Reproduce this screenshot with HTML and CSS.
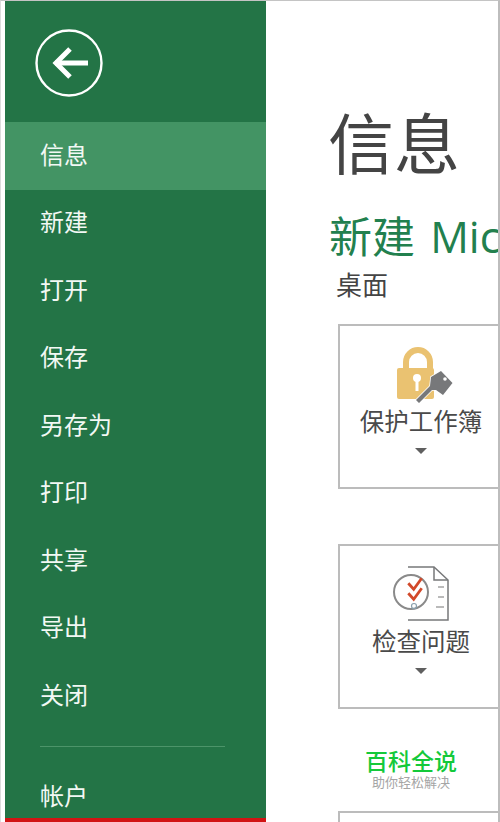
FILE: index.html
```html
<!DOCTYPE html>
<html lang="zh-CN">
<head>
<meta charset="utf-8">
<title>信息</title>
<link rel="stylesheet" href="styles.css">
</head>
<body>
<div class="window">
  <aside class="sidebar">
    <div class="back">
      <svg class="back-icon" width="68" height="68" viewBox="0 0 68 68" fill="none" stroke="#fff">
        <circle cx="34" cy="34" r="32.5" stroke-width="2.4"/>
        <path d="M20 34H53" stroke-width="5"/>
        <path d="M35 20L21 34L35 48" stroke-width="5"/>
      </svg>
    </div>
    <nav class="menu">
      <a class="item active">信息</a>
      <a class="item">新建</a>
      <a class="item">打开</a>
      <a class="item">保存</a>
      <a class="item">另存为</a>
      <a class="item">打印</a>
      <a class="item">共享</a>
      <a class="item">导出</a>
      <a class="item">关闭</a>
    </nav>
    <div class="divider"></div>
    <a class="item account">帐户</a>
  </aside>
  <main class="content">
    <h1 class="title">信息</h1>
    <h2 class="subtitle">新建 Microsoft Excel 工作表</h2>
    <div class="path">桌面</div>
    <section class="card card-first">
      <svg class="card-icon" width="64" height="64" viewBox="0 0 64 64">
        <path d="M17 30V22a12 12 0 0 1 24 0V30" fill="none" stroke="#eac271" stroke-width="6"/>
        <rect x="8" y="28" width="37" height="31" rx="2" fill="#eac271"/>
        <circle cx="28" cy="38" r="4" fill="#fff"/>
        <rect x="26.500" y="39" width="3" height="12" fill="#fff"/>
        <path d="M42 37L52 31L63.500 43L54 55L47 50L43 50L30 63L27 60L41 46Z" fill="#77787a" stroke="#fff" stroke-width="1.500" paint-order="stroke"/>
        <circle cx="56" cy="39" r="1.800" fill="#fff"/>
      </svg>
      <div class="card-label">保护工作簿</div>
      <svg class="caret" width="12" height="6" viewBox="0 0 12 6"><path d="M0 0H12L6 6Z" fill="#5f5f5f"/></svg>
    </section>
    <section class="card card-second">
      <svg class="card-icon" width="64" height="64" viewBox="0 0 64 64" fill="none">
        <path d="M19 7H45L59 20V60H19" fill="#fff" stroke="#77787a" stroke-width="1.500"/>
        <path d="M45 7V20H59" stroke="#77787a" stroke-width="1.500"/>
        <path d="M49 27H55M49 37H55M47 47H55" stroke="#a4a4a4" stroke-width="1.500"/>
        <circle cx="22" cy="32" r="17" fill="#fff" stroke="#8a8a8a" stroke-width="2"/>
        <path d="M19.300 23.300L24.700 29.300L32.700 18.300M19.300 33.300L24.700 39.300L32.700 28.300" stroke="#d2492a" stroke-width="2.800"/>
        <circle cx="25" cy="46" r="2.500" stroke="#8aa0ad" stroke-width="1.200"/>
      </svg>
      <div class="card-label">检查问题</div>
      <svg class="caret" width="12" height="6" viewBox="0 0 12 6"><path d="M0 0H12L6 6Z" fill="#5f5f5f"/></svg>
    </section>
    <section class="card"></section>
    <div class="watermark">
      <div class="wm-title">百科全说</div>
      <div class="wm-sub">助你轻松解决</div>
    </div>
  </main>
</div>
</body>
</html>
```

FILE: styles.css
```css
* { box-sizing: border-box; }
html, body { margin: 0; height: 100%; overflow: hidden; background: #fff; }
body { font-family: "Noto Sans CJK SC", "Liberation Sans", sans-serif; }
.window {
  position: relative;
  display: flex;
  width: 500px;
  height: 822px;
  padding-left: 4px;
  border-top: 1px solid #c4c4c4;
  border-left: 1px solid #dcdcdc;
  border-right: 2px solid #bdbdbd;
  overflow: hidden;
}
.sidebar {
  flex: 0 0 261px;
  background: #237446;
  border-bottom: 4px solid #d11414;
  color: #fff;
  display: flex;
  flex-direction: column;
}
.back { flex: none; height: 121px; padding: 28px 0 0 30px; }
.back-icon { display: block; }
.menu { flex: none; display: flex; flex-direction: column; }
.item {
  flex: none;
  display: flex;
  align-items: center;
  height: 67.5px;
  padding: 0 0 4px 35px;
  font-size: 24px;
  line-height: 1;
  color: #f2f8f4;
}
.active { background: #439464; }
.divider {
  flex: none;
  height: 1px;
  margin: 16px 41px 0 35px;
  background: #4c9469;
}
.account { margin-top: 17px; }
.content {
  flex: 1;
  min-width: 0;
  padding-left: 64px;
  overflow: hidden;
  white-space: nowrap;
}
.title {
  margin: 0 0 0 -2px;
  padding-top: 96px;
  font-size: 66px;
  line-height: 86px;
  font-weight: 400;
  color: #444;
}
.subtitle {
  margin: 24px 0 -2px -1px;
  font-family: "Open Sans", "Noto Sans CJK SC", sans-serif;
  font-size: 43px;
  line-height: 60px;
  font-weight: 400;
  word-spacing: 4px;
  color: #22804e;
}
.path {
  padding-left: 6px;
  font-size: 26px;
  line-height: 38px;
  color: #444;
}
.card {
  width: 190px;
  height: 165px;
  margin: 0 0 55px 8px;
  border: 2px solid #bcbcbc;
  display: flex;
  flex-direction: column;
  align-items: center;
  padding: 14px 24px 0 0;
}
.card-first { margin-top: 21px; }
.card-second { margin-bottom: 102px; }
.card-icon { display: block; flex: none; }
.card-label {
  font-size: 24.500px;
  line-height: 34px;
  color: #4a4a4a;
}
.caret { display: block; margin-top: 10px; flex: none; }
.watermark {
  position: absolute;
  left: 359px;
  top: 745px;
  width: 102px;
  text-align: center;
}
.wm-title { font-size: 23px; line-height: 28px; color: #14c93a; font-weight: 500; }
.wm-sub { font-size: 13px; line-height: 16px; color: #a5a5a5; }
```
